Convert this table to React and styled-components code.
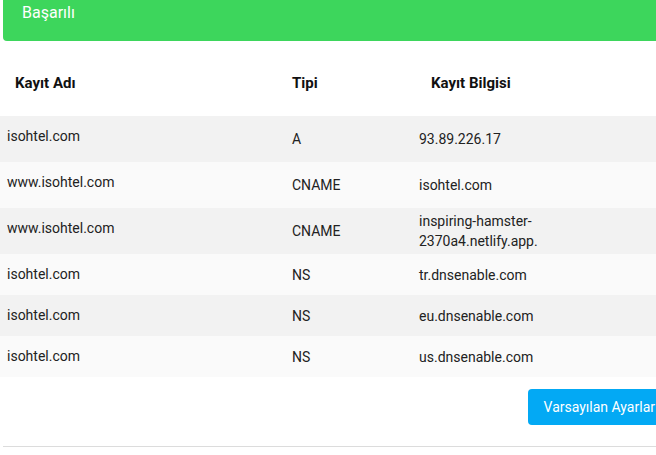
import React from 'react';
import styled, { createGlobalStyle } from 'styled-components';

const GlobalStyle = createGlobalStyle`
  html, body {
    margin: 0;
    padding: 0;
    background: #fff;
    overflow: hidden;
  }
  body {
    font-family: Roboto, "Liberation Sans", Arial, sans-serif;
  }
`;

const Page = styled.div`
  width: 670px;
  display: flex;
  flex-direction: column;
`;

const Alert = styled.div`
  margin-left: 3px;
  height: 41px;
  box-sizing: border-box;
  padding: 2px 0 0 19px;
  background: #3dd65c;
  color: #fff;
  font-size: 16px;
  line-height: 22px;
  border-bottom-left-radius: 4px;
`;

const Table = styled.div`
  display: flex;
  flex-direction: column;
`;

const Row = styled.div`
  display: grid;
  grid-template-columns: 292px 127px 1fr;
  min-height: ${p => p.height}px;
  background: ${p => p.bg || 'transparent'};
  color: #222;
  font-size: 14px;
  line-height: 20px;
`;

const HeadRow = styled(Row)`
  color: #111;
  font-size: 15px;
  font-weight: 700;
  line-height: 22px;
  align-items: center;
  padding-top: 9px;
  box-sizing: border-box;
`;

const Cell = styled.div`
  padding-left: ${p => p.pad || 0}px;
  align-self: ${p => (p.top ? 'start' : 'center')};
  padding-top: ${p => (p.top ? 10 : 0)}px;
`;

const Footer = styled.div`
  display: flex;
  justify-content: flex-end;
  padding: 12px 0 21px;
`;

const Button = styled.button`
  height: 36px;
  padding: 0 15px 0 16px;
  border: none;
  border-radius: 4px;
  background: #03a9f4;
  color: #fff;
  font-family: Roboto, "Liberation Sans", Arial, sans-serif;
  font-size: 14px;
  cursor: pointer;
`;

const Divider = styled.div`
  margin-left: 3px;
  height: 1px;
  background: #dcdcdc;
`;

const records = [
  { name: 'isohtel.com', type: 'A', info: ['93.89.226.17'] },
  { name: 'www.isohtel.com', type: 'CNAME', info: ['isohtel.com'] },
  { name: 'www.isohtel.com', type: 'CNAME', info: ['inspiring-hamster-', '2370a4.netlify.app.'] },
  { name: 'isohtel.com', type: 'NS', info: ['tr.dnsenable.com'] },
  { name: 'isohtel.com', type: 'NS', info: ['eu.dnsenable.com'] },
  { name: 'isohtel.com', type: 'NS', info: ['us.dnsenable.com'] },
];

const App = () => (
  <Page>
    <GlobalStyle />
    <Alert>Başarılı</Alert>
    <Table>
      <HeadRow height={75}>
        <Cell pad={15}>Kayıt Adı</Cell>
        <Cell>Tipi</Cell>
        <Cell pad={12}>Kayıt Bilgisi</Cell>
      </HeadRow>
      {records.map((r, i) => (
        <Row key={i} height={i < 3 ? 46 : 41} bg={i % 2 === 0 ? '#f2f2f2' : '#fafafa'}>
          <Cell pad={7} top>{r.name}</Cell>
          <Cell>{r.type}</Cell>
          <Cell>
            {r.info.map(line => (
              <div key={line}>{line}</div>
            ))}
          </Cell>
        </Row>
      ))}
    </Table>
    <Footer>
      <Button>Varsayılan Ayarlar</Button>
    </Footer>
    <Divider />
  </Page>
);

export default App;
